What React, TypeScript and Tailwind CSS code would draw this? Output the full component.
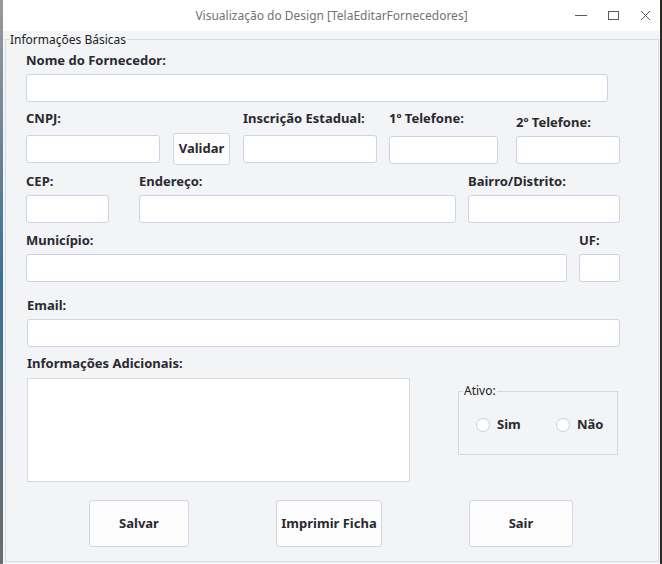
import React from "react";

const inputCls = "block h-[28px] bg-white border border-[#cdd3e4] rounded-[3px]";
const labelCls =
  "block h-[16px] leading-[16px] text-[13px] font-bold text-[#2a2930] whitespace-nowrap";
const btnCls =
  "flex items-center justify-center bg-[#fdfdfe] border border-[#cfd5e4] rounded-[3px] text-[13px] font-bold text-[#2a2930] whitespace-nowrap";

function Field({
  label,
  width,
  className = "",
  labelClass = "",
  inputClass = "mt-[6px]",
}: {
  label: string;
  width: string;
  className?: string;
  labelClass?: string;
  inputClass?: string;
}) {
  return (
    <div className={`flex flex-col ${width} ${className}`}>
      <span className={`${labelCls} ${labelClass}`}>{label}</span>
      <div className={`${inputCls} ${inputClass}`} />
    </div>
  );
}

export default function App() {
  return (
    <div className="w-[662px] h-[564px] flex bg-[#2f2f2f] font-['Noto_Sans',sans-serif] overflow-hidden">
      <div className="w-[3px] h-full bg-gradient-to-b from-[#9a9a9a] via-[#3d6f8e] to-[#6c6c6c]" />
      <div className="w-[657px] h-full flex flex-col bg-[#f3f4f6]">
        {/* Title bar */}
        <div className="h-[31px] bg-white grid grid-cols-[1fr_auto_1fr] items-center">
          <div />
          <span className="text-[12px] leading-[16px] text-[#727272] whitespace-nowrap">
            Visualização do Design [TelaEditarFornecedores]
          </span>
          <div className="flex justify-end">
            <svg width="90" height="31" viewBox="0 0 90 31" fill="none" stroke="#5a5a5a" strokeWidth="1">
              <line x1="5" y1="15.5" x2="17" y2="15.5" />
              <rect x="38.5" y="11.5" width="10" height="8" />
              <line x1="71" y1="11" x2="80" y2="20" />
              <line x1="80" y1="11" x2="71" y2="20" />
            </svg>
          </div>
        </div>

        {/* Content */}
        <div className="flex-1 pl-[2px] pt-[8px]">
          <div className="relative w-[654px] h-[523px] border border-[#d9dadf]">
            <span className="absolute left-[3px] top-[-8px] px-[1px] bg-[#f3f4f6] text-[12px] leading-[16px] text-[#222]">
              Informações Básicas
            </span>
            <div className="pl-[20px] flex flex-col">
              {/* Row 1 */}
              <div className="flex flex-col pt-[12px]">
                <span className={labelCls}>Nome do Fornecedor:</span>
                <div className={`${inputCls} mt-[6px] w-[582px]`} />
              </div>

              {/* Row 2 */}
              <div className="flex items-start mt-[8px] h-[63px]">
                <Field label="CNPJ:" width="w-[134px]" inputClass="mt-[9px]" />
                <button className={`${btnCls} ml-[13px] mt-[23px] w-[57px] h-[32px]`}>Validar</button>
                <Field label="Inscrição Estadual:" width="w-[134px]" className="ml-[13px]" inputClass="mt-[9px]" />
                <Field label="1º Telefone:" width="w-[109px]" className="ml-[12px]" inputClass="mt-[10px]" />
                <Field
                  label="2º Telefone:"
                  width="w-[104px]"
                  className="ml-[18px]"
                  labelClass="mt-[4px]"
                  inputClass="mt-[6px]"
                />
              </div>

              {/* Row 3 */}
              <div className="flex items-start h-[59px]">
                <Field label="CEP:" width="w-[83px]" />
                <Field label="Endereço:" width="w-[317px]" className="ml-[30px]" />
                <Field label="Bairro/Distrito:" width="w-[152px]" className="ml-[12px]" />
              </div>

              {/* Row 4 */}
              <div className="flex items-start h-[65px]">
                <Field label="Município:" width="w-[541px]" />
                <Field label="UF:" width="w-[41px]" className="ml-[12px]" />
              </div>

              {/* Row 5 */}
              <div className="flex items-start h-[58px]">
                <Field label="Email:" width="w-[593px]" className="ml-[1px]" />
              </div>

              {/* Row 6 */}
              <div className="flex items-start h-[145px]">
                <div className="flex flex-col w-[383px] ml-[1px]">
                  <span className={labelCls}>Informações Adicionais:</span>
                  <div className="mt-[7px] h-[104px] bg-white border border-[#d8d9dd]" />
                </div>
                <div className="relative ml-[48px] mt-[36px] w-[160px] h-[64px] border border-[#d6d7dc]">
                  <span className="absolute left-[4px] top-[-9px] px-[1px] bg-[#f3f4f6] text-[12px] leading-[16px] text-[#222]">
                    Ativo:
                  </span>
                  <div className="flex items-center h-full pl-[17px] pt-[4px]">
                    <label className="flex items-center w-[80px]">
                      <span className="w-[14px] h-[14px] rounded-full border border-[#cbcfe0] bg-white" />
                      <span className="ml-[7px] text-[13px] font-bold text-[#2a2930]">Sim</span>
                    </label>
                    <label className="flex items-center">
                      <span className="w-[14px] h-[14px] rounded-full border border-[#cbcfe0] bg-white" />
                      <span className="ml-[7px] text-[13px] font-bold text-[#2a2930]">Não</span>
                    </label>
                  </div>
                </div>
              </div>

              {/* Buttons */}
              <div className="flex h-[47px]">
                <button className={`${btnCls} ml-[63px] w-[100px] h-[47px]`}>Salvar</button>
                <button className={`${btnCls} ml-[87px] w-[106px] h-[47px]`}>Imprimir Ficha</button>
                <button className={`${btnCls} ml-[87px] w-[104px] h-[47px]`}>Sair</button>
              </div>
            </div>
          </div>
        </div>
      </div>
      <div className="w-[2px] h-full bg-[#2a2a22]" />
    </div>
  );
}
